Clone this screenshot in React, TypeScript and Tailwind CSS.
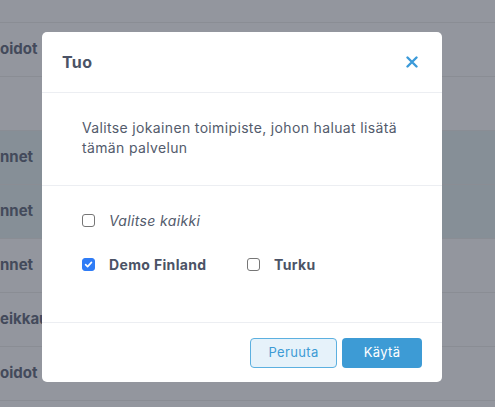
import { useState } from 'react'

const rows = [
  { label: 'oidot', extra: '30 min', hl: false },
  { label: 'oidot', extra: '', hl: false },
  { label: '', extra: '', hl: false },
  { label: 'nnet', extra: '', hl: true },
  { label: 'nnet', extra: '', hl: true },
  { label: 'nnet', extra: '', hl: false },
  { label: 'eikkaukset', extra: '', hl: false },
  { label: 'oidot', extra: '', hl: false },
  { label: '', extra: '', hl: false },
]

function Box({ checked, onClick }: { checked: boolean; onClick: () => void }) {
  return (
    <button
      onClick={onClick}
      className={`w-[13px] h-[13px] rounded-[3px] border flex items-center justify-center shrink-0 ${
        checked ? 'bg-[#2f7cf6] border-[#2f7cf6]' : 'bg-white border-[#767676]'
      }`}
    >
      {checked && (
        <svg width="9" height="9" viewBox="0 0 10 10">
          <path d="M1.8 5.2 L4 7.4 L8.3 2.6" fill="none" stroke="white" strokeWidth="1.8" strokeLinecap="round" strokeLinejoin="round" />
        </svg>
      )}
    </button>
  )
}

export default function App() {
  const [sel, setSel] = useState({ demo: true, turku: false })
  const all = sel.demo && sel.turku

  return (
    <div className="relative w-[495px] h-[407px] overflow-hidden bg-[#93969e] font-['Inter',sans-serif]">
      <div className="-mt-[31px]">
        {rows.map((r, i) => (
          <div
            key={i}
            className={`h-[54px] border-b border-[#8a8d94] flex items-center text-[15px] font-bold text-[#434a5b] ${
              r.hl ? 'bg-[#868f97]' : ''
            }`}
          >
            <span className="w-[270px]">{r.label}</span>
            <span>{r.extra}</span>
          </div>
        ))}
      </div>

      <div className="absolute left-[42px] top-[32px] w-[400px] h-[350px] bg-white rounded-[5px] flex flex-col text-[#4a5264] tracking-[0.35px]">
        <div className="h-[61px] px-5 flex items-center justify-between border-b border-[#eceef2]">
          <h2 className="text-[16px] font-bold text-[#4b5366]">Tuo</h2>
          <button className="text-[#3b9ad9] mr-[4px]">
            <svg width="12" height="12" viewBox="0 0 12 12">
              <path d="M1.5 1.5 L10.5 10.5 M10.5 1.5 L1.5 10.5" stroke="currentColor" strokeWidth="2.4" strokeLinecap="round" />
            </svg>
          </button>
        </div>

        <div className="h-[93px] px-10 pt-[25px] border-b border-[#eceef2]">
          <p className="text-[14px] leading-[20px] text-[#535b6c]">
            Valitse jokainen toimipiste, johon haluat lisätä tämän palvelun
          </p>
        </div>

        <div className="flex-1 px-10 pt-[24px] flex flex-col gap-[24px] border-b border-[#eceef2]">
          <label className="flex items-center gap-[14px] h-[20px]">
            <Box checked={all} onClick={() => setSel({ demo: !all, turku: !all })} />
            <span className="italic text-[14px] text-[#535b6c]">Valitse kaikki</span>
          </label>
          <div className="flex items-center h-[20px]">
            <label className="flex items-center gap-[14px] w-[165px]">
              <Box checked={sel.demo} onClick={() => setSel({ ...sel, demo: !sel.demo })} />
              <span className="font-bold text-[14px] text-[#4b5366]">Demo Finland</span>
            </label>
            <label className="flex items-center gap-[14px]">
              <Box checked={sel.turku} onClick={() => setSel({ ...sel, turku: !sel.turku })} />
              <span className="font-bold text-[14px] text-[#4b5366]">Turku</span>
            </label>
          </div>
        </div>

        <div className="h-[59px] px-5 flex items-center justify-end gap-[5px]">
          <button className="w-[87px] h-[30px] rounded-[4px] border border-[#5cb0e0] bg-[#e6f2fa] text-[#3d9bd5] text-[13px]">
            Peruuta
          </button>
          <button className="w-[80px] h-[30px] rounded-[4px] bg-[#3d9bd5] text-white text-[13px]">
            Käytä
          </button>
        </div>
      </div>
    </div>
  )
}
